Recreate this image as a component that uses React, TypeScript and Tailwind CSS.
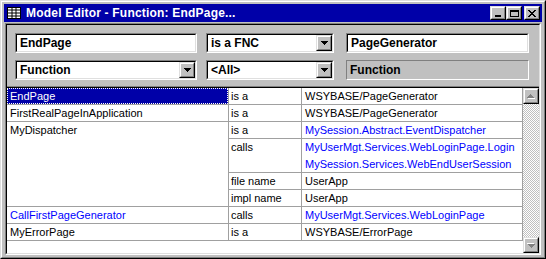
import React from 'react';

type Cell = { text: string; blue?: boolean };

interface Row {
  name?: Cell;
  span?: number;
  rel: string;
  targets: Cell[];
}

const rows: Row[] = [
  { name: { text: 'EndPage' }, rel: 'is a', targets: [{ text: 'WSYBASE/PageGenerator' }] },
  { name: { text: 'FirstRealPageInApplication' }, rel: 'is a', targets: [{ text: 'WSYBASE/PageGenerator' }] },
  { name: { text: 'MyDispatcher' }, span: 4, rel: 'is a', targets: [{ text: 'MySession.Abstract.EventDispatcher', blue: true }] },
  {
    rel: 'calls',
    targets: [
      { text: 'MyUserMgt.Services.WebLoginPage.Login', blue: true },
      { text: 'MySession.Services.WebEndUserSession', blue: true },
    ],
  },
  { rel: 'file name', targets: [{ text: 'UserApp' }] },
  { rel: 'impl name', targets: [{ text: 'UserApp' }] },
  { name: { text: 'CallFirstPageGenerator', blue: true }, rel: 'calls', targets: [{ text: 'MyUserMgt.Services.WebLoginPage', blue: true }] },
  { name: { text: 'MyErrorPage' }, rel: 'is a', targets: [{ text: 'WSYBASE/ErrorPage' }] },
];

const Sunken: React.FC<{ className?: string; children: React.ReactNode }> = ({ className = '', children }) => (
  <div className={`border border-t-[#808080] border-l-[#808080] border-r-white border-b-white ${className}`}>
    <div className="h-full border border-t-black border-l-black border-r-[#dfdfdf] border-b-[#dfdfdf]">{children}</div>
  </div>
);

const Raised: React.FC<{ className?: string; children?: React.ReactNode }> = ({ className = '', children }) => (
  <div className={`border border-t-[#dfdfdf] border-l-[#dfdfdf] border-r-black border-b-black ${className}`}>
    <div className="h-full bg-[#c0c0c0] border border-t-white border-l-white border-r-[#808080] border-b-[#808080] flex items-center justify-center">
      {children}
    </div>
  </div>
);

const DownArrow = () => (
  <svg width="7" height="4" viewBox="0 0 7 4">
    <path d="M0 0h7v1H0zM1 1h5v1H1zM2 2h3v1H2zM3 3h1v1H3z" fill="#000" />
  </svg>
);

const TextBox: React.FC<{ width: string; text: string }> = ({ width, text }) => (
  <Sunken className={`${width} h-[20px]`}>
    <div className="h-full bg-white pl-[3px] flex items-center text-[12px] font-bold text-black">{text}</div>
  </Sunken>
);

const Combo: React.FC<{ width: string; text: string }> = ({ width, text }) => (
  <Sunken className={`${width} h-[20px]`}>
    <div className="h-full bg-white flex items-center">
      <span className="flex-1 pl-[3px] text-[12px] font-bold text-black">{text}</span>
      <Raised className="w-[16px] h-[16px]">
        <DownArrow />
      </Raised>
    </div>
  </Sunken>
);

const TitleButton: React.FC<{ kind: 'min' | 'max' | 'close' }> = ({ kind }) => (
  <Raised className="w-[16px] h-[14px]">
    <svg width="9" height="7" viewBox="0 0 9 7" className="mt-[1px]">
      {kind === 'min' && <path d="M1 5h6v2H1z" fill="#000" />}
      {kind === 'max' && <path d="M0 0h9v2H0zM0 0h1v7H0zM8 0h1v7H8zM0 6h9v1H0z" fill="#000" />}
      {kind === 'close' && (
        <path
          d="M0 0h2v1H0zM6 0h2v1H6zM1 1h2v1H1zM5 1h2v1H5zM2 2h4v1H2zM3 3h2v1H3zM2 4h4v1H2zM1 5h2v1H1zM5 5h2v1H5zM0 6h2v1H0zM6 6h2v1H6z"
          fill="#000"
        />
      )}
    </svg>
  </Raised>
);

const TableIcon = () => (
  <svg width="14" height="12" viewBox="0 0 14 12">
    <rect x="0.5" y="0.5" width="13" height="11" fill="#fff" stroke="#000" />
    <path d="M1 3h12M1 6h12M1 9h12M5 1v10M9 1v10" stroke="#000" strokeWidth="1" />
  </svg>
);

const ScrollButton = ({ down }: { down?: boolean }) => (
  <Raised className="w-[16px] h-[16px]">
    <svg width="8" height="5" viewBox="0 0 8 5" className={down ? 'rotate-180' : ''}>
      <path d="M3 0h1v1H3zM2 1h3v1H2zM1 2h5v1H1zM0 3h7v1H0z" fill="#808080" />
      <path d="M1 4h7v1H1z" fill="#fff" />
    </svg>
  </Raised>
);

const Text: React.FC<{ cell: Cell; className?: string }> = ({ cell, className = '' }) => (
  <div className={`leading-[17px] whitespace-nowrap ${cell.blue ? 'text-[#0000ff]' : 'text-black'} ${className}`}>{cell.text}</div>
);

export default function App() {
  return (
    <div className="w-[546px] h-[259px] bg-[#c0c0c0] border border-t-[#dfdfdf] border-l-[#dfdfdf] border-r-black border-b-black font-['Liberation_Sans',Arial,sans-serif]">
      <div className="h-full border border-t-white border-l-white border-r-[#808080] border-b-[#808080] p-[2px] flex flex-col">
        {/* title bar */}
        <div className="h-[18px] bg-[#0000a8] flex items-center pl-[3px] pr-[2px] shrink-0">
          <TableIcon />
          <span className="ml-[5px] text-white text-[12px] font-bold tracking-[0.2px]">Model Editor - Function: EndPage...</span>
          <div className="ml-auto flex items-center">
            <TitleButton kind="min" />
            <TitleButton kind="max" />
            <div className="w-[2px]" />
            <TitleButton kind="close" />
          </div>
        </div>

        {/* client */}
        <Sunken className="mt-[1px] mx-[1px] flex-1">
          <div className="h-full flex flex-col">
            <div className="pt-[8px] pl-[8px] flex flex-col gap-[7px]">
              <div className="flex">
                <TextBox width="w-[182px]" text="EndPage" />
                <Combo width="w-[128px] ml-[9px]" text="is a FNC" />
                <TextBox width="w-[183px] ml-[12px]" text="PageGenerator" />
              </div>
              <div className="flex">
                <Combo width="w-[182px]" text="Function" />
                <Combo width="w-[128px] ml-[9px]" text="<All>" />
                <div className="w-[183px] ml-[12px] h-[20px] border border-t-[#808080] border-l-[#808080] border-r-white border-b-white pl-[3px] flex items-center text-[12px] font-bold text-black">
                  Function
                </div>
              </div>
            </div>

            {/* grid */}
            <div className="mt-[6px] flex-1 border-t border-t-[#808080] flex flex-col">
              <div className="flex-1 border-t border-t-black bg-white flex text-[11px]">
                <div className="w-[516px] grid grid-cols-[222px_73px_221px] grid-rows-[17px_17px_17px_34px_17px_17px_17px_17px] content-start">
                  {rows.map((r, i) => (
                    <React.Fragment key={i}>
                      {r.name && (
                        <div
                          className={`border-r border-b border-[#a0a0a0] ${r.span === 4 ? 'row-span-4' : ''} ${i === 0 ? 'p-0' : 'pl-[3px]'}`}
                        >
                          {i === 0 ? (
                            <div className="h-full bg-[#0000a8] border border-dotted border-white pl-[2px]">
                              <div className="leading-[15px] text-white">{r.name.text}</div>
                            </div>
                          ) : (
                            <Text cell={r.name} />
                          )}
                        </div>
                      )}
                      <div className="border-r border-b border-[#a0a0a0] pl-[2px]">
                        <Text cell={{ text: r.rel }} />
                      </div>
                      <div className="border-r border-b border-[#a0a0a0] pl-[3px]">
                        {r.targets.map((t, j) => (
                          <Text key={j} cell={t} />
                        ))}
                      </div>
                    </React.Fragment>
                  ))}
                </div>
                <div className="w-[16px] flex flex-col bg-[repeating-conic-gradient(#c0c0c0_0_25%,#ffffff_0_50%)] bg-size-[2px_2px]">
                  <ScrollButton />
                  <div className="flex-1" />
                  <ScrollButton down />
                </div>
              </div>
            </div>
          </div>
        </Sunken>
      </div>
    </div>
  );
}
